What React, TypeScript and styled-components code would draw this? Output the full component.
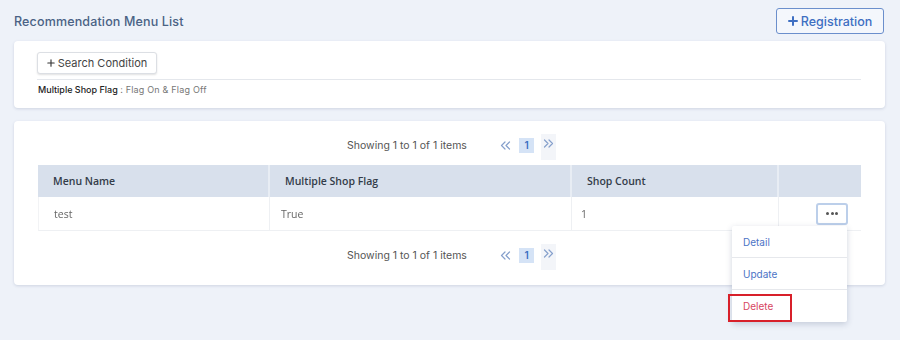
import React from "react";
import styled, { createGlobalStyle } from "styled-components";

const Global = createGlobalStyle`
  html, body { margin: 0; padding: 0; background: #eef2f9; }
  body { font-family: Inter, "Noto Sans", sans-serif; -webkit-font-smoothing: antialiased; }
  * { box-sizing: border-box; }
`;

const Page = styled.div`
  width: 900px;
  height: 340px;
  padding: 0 15px 0 14px;
  background: #eef2f9;
`;

const Header = styled.div`
  height: 41px;
  display: flex;
  align-items: center;
  justify-content: space-between;
  padding-top: 1px;
`;

const Title = styled.h1`
  margin: 0;
  font-family: Inter, sans-serif;
  font-size: 12.5px;
  font-weight: 500;
  color: #4a6285;
  letter-spacing: 0.15px;
`;

const RegButton = styled.button`
  height: 26px;
  width: 108px;
  margin-right: 1px;
  border: 1px solid #6b8fcc;
  border-radius: 3px;
  background: #f4f7fc;
  color: #3e6fc2;
  font-family: Inter, sans-serif;
  font-size: 12.5px;
  font-weight: 500;
  display: flex;
  align-items: center;
  justify-content: center;
  gap: 3px;
  padding: 0;
`;

const Card = styled.div<{ $height: number; $top: number }>`
  margin-top: ${(p) => p.$top}px;
  height: ${(p) => p.$height}px;
  background: #fff;
  border-radius: 4px;
  box-shadow: 0 1px 3px rgba(60, 80, 120, 0.18);
`;

const FilterBody = styled.div`
  padding: 11px 24px 0 23px;
`;

const SearchButton = styled.button`
  height: 22px;
  width: 120px;
  border: 1px solid #dcdfe4;
  border-radius: 3px;
  background: #fff;
  box-shadow: 0 1px 2px rgba(0, 0, 0, 0.12);
  font-family: Inter, sans-serif;
  font-size: 11px;
  color: #444;
  display: flex;
  align-items: center;
  justify-content: center;
  gap: 3px;
  padding: 0;
`;

const Divider = styled.div`
  height: 1px;
  background: #e4e7ec;
  margin-top: 5px;
`;

const FlagLine = styled.div`
  margin-top: 4px;
  padding-left: 1px;
  font-family: Inter, sans-serif;
  font-size: 9px;
  color: #222;
  font-weight: 500;
  span { color: #777; font-weight: 400; letter-spacing: 0.2px; }
`;

const ListBody = styled.div`
  padding: 12px 24px 0 24px;
`;

const PagerRow = styled.div<{ $mt: number }>`
  margin-top: ${(p) => p.$mt}px;
  height: 24px;
  display: flex;
  align-items: center;
  justify-content: center;
  padding-left: 4px;
`;

const PagerText = styled.div`
  font-family: Inter, sans-serif;
  font-size: 10.5px;
  color: #555;
  width: 151px;
`;

const PagerNav = styled.div`
  display: flex;
  align-items: center;
  height: 24px;
`;

const Arrow = styled.div<{ $shade?: boolean }>`
  width: 15px;
  height: 26px;
  display: flex;
  align-items: center;
  justify-content: center;
  background: ${(p) => (p.$shade ? "#f3f5f9" : "transparent")};
  margin-top: ${(p) => (p.$shade ? "4px" : "0")};
  padding-bottom: ${(p) => (p.$shade ? "8px" : "0")};
`;

const PageNum = styled.div`
  width: 15px;
  height: 15px;
  margin: 0 7px 0 6px;
  background: #d5e3f6;
  color: #3a6fc2;
  font-family: Inter, sans-serif;
  font-size: 10px;
  font-weight: 600;
  display: flex;
  align-items: center;
  justify-content: center;
`;

const Table = styled.div`
  margin-top: 8px;
  display: grid;
  grid-template-columns: 232px 302px 207px 82px;
  font-family: "Open Sans", sans-serif;
  font-size: 10.5px;
`;

const Th = styled.div<{ $last?: boolean }>`
  height: 32px;
  background: #d8e0ec;
  color: #333c49;
  font-weight: 600;
  display: flex;
  align-items: center;
  padding-left: 15px;
  border-right: ${(p) => (p.$last ? "none" : "2px solid #e8edf4")};
`;

const Td = styled.div<{ $last?: boolean; $pad: number }>`
  position: relative;
  height: 34px;
  color: #666;
  display: flex;
  align-items: center;
  padding-left: ${(p) => p.$pad}px;
  border-bottom: 1px solid #eef0f3;
  border-right: ${(p) => (p.$last ? "none" : "1px solid #eef0f3")};
  border-left: ${(p) => (p.$pad === 15 ? "1px solid #f2f3f5" : "none")};
  justify-content: ${(p) => (p.$last ? "flex-end" : "flex-start")};
`;

const CellText = styled.span`
  display: inline-block;
  color: #666;
  transform: translateZ(0);
`;

const DotsButton = styled.button`
  width: 32px;
  height: 22px;
  margin-right: 13px;
  border: 2px solid #bccfea;
  border-radius: 3px;
  background: #fff;
  padding: 0;
  display: flex;
  align-items: center;
  justify-content: center;
  gap: 1.5px;
`;

const Dot = styled.span`
  width: 3px;
  height: 3px;
  border-radius: 50%;
  background: #555;
`;

const Menu = styled.div`
  position: absolute;
  top: 29px;
  right: 14px;
  width: 115px;
  background: #fff;
  box-shadow: 0 2px 6px rgba(40, 60, 100, 0.22);
  border-radius: 2px;
  z-index: 5;
`;

const MenuItem = styled.div<{ $danger?: boolean; $last?: boolean }>`
  position: relative;
  height: 32px;
  display: flex;
  align-items: center;
  padding-left: 11px;
  font-family: Inter, sans-serif;
  font-size: 10px;
  color: ${(p) => (p.$danger ? "#d74662" : "#4b74c6")};
  border-bottom: ${(p) => (p.$last ? "none" : "1px solid #e6e8ec")};
`;

const Highlight = styled.div`
  position: absolute;
  left: -4px;
  top: 4px;
  width: 64px;
  height: 28px;
  border: 2px solid #d8202a;
`;

const Plus = ({ size, color, stroke }: { size: number; color: string; stroke: number }) => (
  <svg width={size} height={size} viewBox="0 0 10 10">
    <path d="M5 1v8M1 5h8" stroke={color} strokeWidth={stroke} strokeLinecap="round" />
  </svg>
);

const Chevrons = ({ dir }: { dir: "l" | "r" }) => (
  <svg width="11" height="9" viewBox="0 0 11 9">
    <path
      d={dir === "l" ? "M5 1L1.5 4.5L5 8M9.5 1L6 4.5L9.5 8" : "M1.5 1L5 4.5L1.5 8M6 1L9.5 4.5L6 8"}
      stroke="#86a0cc"
      strokeWidth="1.2"
      fill="none"
      strokeLinecap="round"
      strokeLinejoin="round"
    />
  </svg>
);

const Pager = ({ mt }: { mt: number }) => (
  <PagerRow $mt={mt}>
    <PagerText>Showing 1 to 1 of 1 items</PagerText>
    <PagerNav>
      <Arrow>
        <Chevrons dir="l" />
      </Arrow>
      <PageNum>1</PageNum>
      <Arrow $shade>
        <Chevrons dir="r" />
      </Arrow>
    </PagerNav>
  </PagerRow>
);

export default function App() {
  return (
    <Page>
      <Global />
      <Header>
        <Title>Recommendation Menu List</Title>
        <RegButton>
          <Plus size={10} color="#3e6fc2" stroke={2} />
          Registration
        </RegButton>
      </Header>
      <Card $top={0} $height={67}>
        <FilterBody>
          <SearchButton>
            <Plus size={8} color="#333" stroke={1.4} />
            Search Condition
          </SearchButton>
          <Divider />
          <FlagLine>
            Multiple Shop Flag <span>: Flag On &amp; Flag Off</span>
          </FlagLine>
        </FilterBody>
      </Card>
      <Card $top={13} $height={164}>
        <ListBody>
          <Pager mt={0} />
          <Table>
            <Th>Menu Name</Th>
            <Th>Multiple Shop Flag</Th>
            <Th>Shop Count</Th>
            <Th $last />
            <Td $pad={15}>
              <CellText>test</CellText>
            </Td>
            <Td $pad={11}>
              <CellText>True</CellText>
            </Td>
            <Td $pad={9}>
              <CellText>1</CellText>
            </Td>
            <Td $pad={0} $last>
              <DotsButton>
                <Dot />
                <Dot />
                <Dot />
              </DotsButton>
              <Menu>
                <MenuItem>Detail</MenuItem>
                <MenuItem>Update</MenuItem>
                <MenuItem $danger $last>
                  Delete
                  <Highlight />
                </MenuItem>
              </Menu>
            </Td>
          </Table>
          <Pager mt={12} />
        </ListBody>
      </Card>
    </Page>
  );
}
